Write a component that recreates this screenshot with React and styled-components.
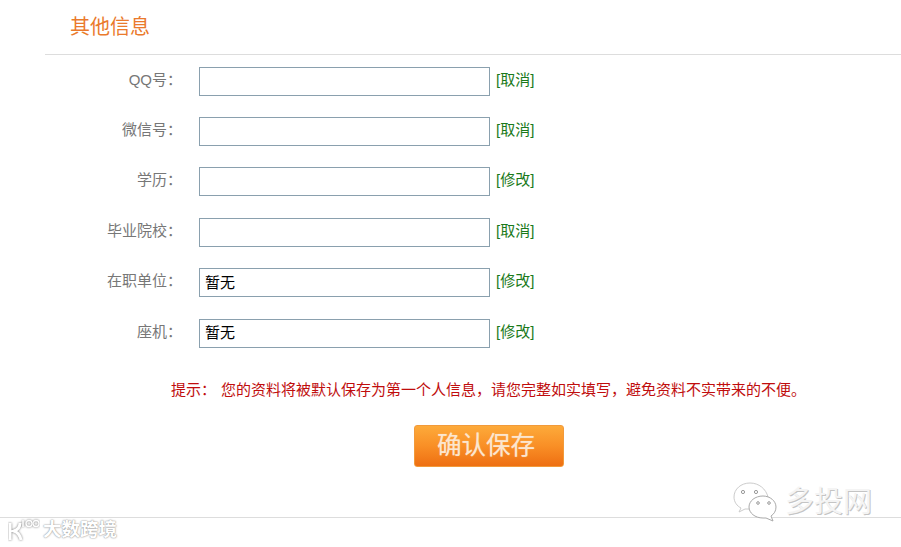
import React from "react"
import styled, { createGlobalStyle } from "styled-components"

const GlobalStyle = createGlobalStyle`
html, body {
    margin: 0;
    padding: 0;
    background: #fff;
}
body {
    font-family: "Liberation Sans", "Noto Sans CJK SC", sans-serif;
}
`

const Page = styled.div`
position: relative;
width: 901px;
height: 547px;
overflow: hidden;
background: #fff;
`

const Section = styled.section`
height: 517px;
border-bottom: 1px solid #ddd;
box-sizing: content-box;
`

const Header = styled.div`
margin-left: 45px;
height: 54px;
border-bottom: 1px solid #ddd;
padding-left: 25px;
`

const Title = styled.h2`
margin: 0;
font-size: 20px;
font-weight: normal;
line-height: 54px;
color: #ea7a2c;
`

const Form = styled.form`
display: flex;
flex-direction: column;
gap: 21.4px;
padding-top: 11.6px;
`

const Row = styled.div`
display: flex;
align-items: center;
height: 29px;
`

const Label = styled.label`
width: 182px;
padding-bottom: 6px;
text-align: right;
font-size: 15px;
color: #777;
`

const Field = styled.input`
box-sizing: border-box;
width: 291px;
height: 29px;
margin-left: 17px;
padding: 0 5px 3px;
border: 1px solid #8aa0ae;
background: #fff;
font-family: inherit;
font-size: 15px;
color: #000;
outline: none;
`

const Action = styled.a`
margin-left: 6px;
padding-bottom: 6px;
font-size: 15px;
color: #1b7a1b;
`

const Tip = styled.p`
margin: 32px 0 0 171px;
font-size: 15px;
line-height: 20px;
color: #c00d0d;
white-space: pre;
`

const TipText = styled.span`
margin-left: 5px;
`

const SaveButton = styled.button`
display: block;
box-sizing: border-box;
width: 150px;
height: 42px;
margin: 25px 0 0 414px;
padding: 0 6px 0 0;
border: 1px solid #f29a3a;
border-radius: 3px;
background: linear-gradient(to bottom, #fdaa3a 0%, #f98f26 50%, #ee6f12 100%);
font-family: inherit;
font-size: 24.5px;
line-height: 38px;
color: #fbe6cf;
text-shadow: 0 0 1px rgba(255, 255, 255, 0.5);
`

const WatermarkRight = styled.div`
position: absolute;
left: 733px;
top: 482px;
display: flex;
align-items: center;
gap: 7px;
`

const WatermarkName = styled.span`
font-size: 29px;
line-height: 38px;
color: #f4f4f4;
text-shadow: 1px 1px 0 #c4c4c4, -1px -1px 0 #fff;
`

const WatermarkLeft = styled.div`
position: absolute;
left: 8px;
top: 518px;
display: flex;
align-items: center;
gap: 3px;
height: 24px;
`

const WatermarkBrand = styled.span`
font-size: 18.5px;
font-weight: bold;
line-height: 24px;
color: #fff;
text-shadow: 0 0 2px #999, 0 0 1px #999;
`

const fields = [
    { label: "QQ号：", value: "", action: "取消" },
    { label: "微信号：", value: "", action: "取消" },
    { label: "学历：", value: "", action: "修改" },
    { label: "毕业院校：", value: "", action: "取消" },
    { label: "在职单位：", value: "暂无", action: "修改" },
    { label: "座机：", value: "暂无", action: "修改" },
]

const WechatMark = () => (
    <svg width="45" height="40" viewBox="0 0 45 40" fill="#fff" stroke="#ccc" strokeWidth="1">
        <path d="M17 1C8 1 1 7 1 15c0 5 3 9 7 11l-2 4 6-3 6 0c1-8 8-13 17-12C33 7 26 1 17 1z" />
        <path d="M30 14c-8 0-14 5-14 11s6 11 14 11h3l7 3-2-5c3-2 5-5 5-9 0-6-6-11-13-11z" stroke="#aaa" />
        <circle cx="10" cy="10" r="1.6" fill="none" stroke="#999" />
        <circle cx="23" cy="10" r="1.6" fill="none" stroke="#999" />
        <circle cx="25" cy="21" r="1.3" fill="none" stroke="#999" />
        <circle cx="36" cy="21" r="1.3" fill="none" stroke="#999" />
    </svg>
)

const BrandMark = () => (
    <svg width="32" height="24" viewBox="0 0 32 24" fill="none" stroke="#fff">
        <g style={{ filter: "drop-shadow(0 0 1px #777)" }}>
            <path d="M2 5v17M12 5c0 5-3 7-6 8 3 1 6 4 7 9" strokeWidth="3" />
            <path d="M15 2v7" strokeWidth="1.5" />
            <circle cx="21" cy="5.5" r="3" strokeWidth="1.3" />
            <circle cx="28" cy="5.5" r="3" strokeWidth="1.3" />
        </g>
    </svg>
)

const App = () => {
    return (
        <Page>
            <GlobalStyle />
            <Section>
                <Header>
                    <Title>其他信息</Title>
                </Header>
                <Form>
                    {fields.map((f) => (
                        <Row key={f.label}>
                            <Label>{f.label}</Label>
                            <Field defaultValue={f.value} />
                            <Action>[{f.action}]</Action>
                        </Row>
                    ))}
                </Form>
                <Tip>
                    提示：<TipText>您的资料将被默认保存为第一个人信息，请您完整如实填写，避免资料不实带来的不便。</TipText>
                </Tip>
                <SaveButton type="button">确认保存</SaveButton>
            </Section>
            <WatermarkRight>
                <WechatMark />
                <WatermarkName>多投网</WatermarkName>
            </WatermarkRight>
            <WatermarkLeft>
                <BrandMark />
                <WatermarkBrand>大数跨境</WatermarkBrand>
            </WatermarkLeft>
        </Page>
    )
}

export default App
